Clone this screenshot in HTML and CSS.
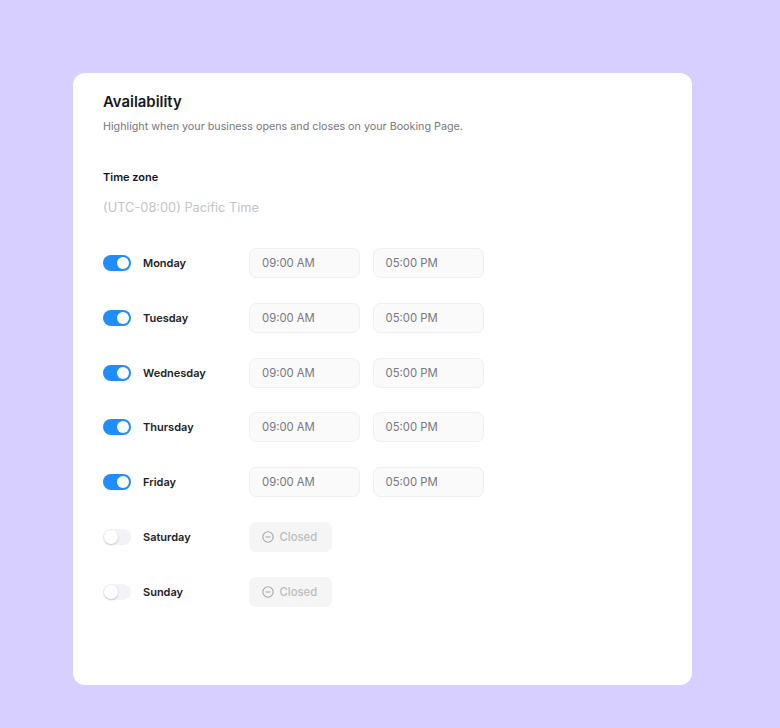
FILE: index.html
```html
<!DOCTYPE html>
<html lang="en">
<head>
  <meta charset="UTF-8">
  <meta name="viewport" content="width=device-width, initial-scale=1.0">
  <title>Availability</title>
  <link rel="stylesheet" href="styles.css">
</head>
<body>

  <div class="card">
    <h1>Availability</h1>
    <p class="subtitle">Highlight when your business opens and closes on your Booking Page.</p>

    <div class="zone-label">Time zone</div>
    <div class="zone-value">(UTC-08:00) Pacific Time</div>

    <div class="days">
      <div class="day">
        <span class="toggle on"></span>
        <span class="day-name">Monday</span>
        <span class="time">09:00 AM</span>
        <span class="time">05:00 PM</span>
      </div>
      <div class="day">
        <span class="toggle on"></span>
        <span class="day-name">Tuesday</span>
        <span class="time">09:00 AM</span>
        <span class="time">05:00 PM</span>
      </div>
      <div class="day">
        <span class="toggle on"></span>
        <span class="day-name">Wednesday</span>
        <span class="time">09:00 AM</span>
        <span class="time">05:00 PM</span>
      </div>
      <div class="day">
        <span class="toggle on"></span>
        <span class="day-name">Thursday</span>
        <span class="time">09:00 AM</span>
        <span class="time">05:00 PM</span>
      </div>
      <div class="day">
        <span class="toggle on"></span>
        <span class="day-name">Friday</span>
        <span class="time">09:00 AM</span>
        <span class="time">05:00 PM</span>
      </div>
      <div class="day">
        <span class="toggle"></span>
        <span class="day-name">Saturday</span>
        <span class="closed">
          <svg class="closed-icon" viewBox="0 0 12 12"><circle cx="6" cy="6" r="5.2"/><path d="M3.6 6h4.8"/></svg>
          Closed
        </span>
      </div>
      <div class="day">
        <span class="toggle"></span>
        <span class="day-name">Sunday</span>
        <span class="closed">
          <svg class="closed-icon" viewBox="0 0 12 12"><circle cx="6" cy="6" r="5.2"/><path d="M3.6 6h4.8"/></svg>
          Closed
        </span>
      </div>
    </div>
  </div>

</body>
</html>
```

FILE: styles.css
```css
body {
  font-family: 'Inter', 'Liberation Sans', sans-serif;
  background-color: #d6cfff;
  margin: 0;
  padding: 73px 88px 43px 73px;
}

.card {
  background-color: white;
  border-radius: 12px;
  height: 612px;
  box-sizing: border-box;
  padding: 20px 30px;
}

h1 {
  font-size: 14.9px;
  line-height: 18px;
  font-weight: 600;
  color: #16161a;
  margin: 0;
}

.subtitle {
  font-size: 10.75px;
  line-height: 16px;
  color: #77777d;
  margin: 8px 0 0;
}

.zone-label {
  font-size: 11px;
  line-height: 14px;
  font-weight: 600;
  color: #16161a;
  margin-top: 35px;
}

.zone-value {
  font-size: 12.8px;
  line-height: 18px;
  color: #c4c4c8;
  margin-top: 15px;
}

.days {
  display: flex;
  flex-direction: column;
  gap: 24.8px;
  margin-top: 31px;
}

.day {
  display: flex;
  align-items: center;
  height: 30px;
}

.toggle {
  width: 28px;
  height: 16px;
  border-radius: 8px;
  background-color: #f3f3f7;
  position: relative;
  margin-right: 12px;
}

  .toggle::after {
    content: "";
    position: absolute;
    left: 1px;
    top: 1px;
    width: 14px;
    height: 14px;
    border-radius: 50%;
    background-color: white;
    box-shadow: 0 1px 2px rgba(0, 0, 0, 0.2);
  }

  .toggle.on {
    background-color: #1f8efa;
  }

    .toggle.on::after {
      left: 14px;
      top: 2px;
      width: 12px;
      height: 12px;
      box-shadow: none;
    }

.day-name {
  width: 106px;
  font-size: 11px;
  font-weight: 600;
  color: #222226;
}

.time {
  width: 111px;
  height: 30px;
  box-sizing: border-box;
  border: 1px solid #f0f0f2;
  border-radius: 7px;
  background-color: #fafafa;
  font-size: 11.3px;
  line-height: 28px;
  color: #77777d;
  padding-left: 12px;
  margin-right: 12.5px;
}

.closed {
  width: 83px;
  height: 30px;
  box-sizing: border-box;
  border-radius: 7px;
  background-color: #f5f5f6;
  font-size: 11.3px;
  font-weight: 500;
  color: #bcbcc0;
  padding-left: 12.5px;
  display: flex;
  align-items: center;
  gap: 6px;
}

.closed-icon {
  width: 12px;
  height: 12px;
  fill: none;
  stroke: #a8a8ac;
  stroke-width: 1.1;
}
```
